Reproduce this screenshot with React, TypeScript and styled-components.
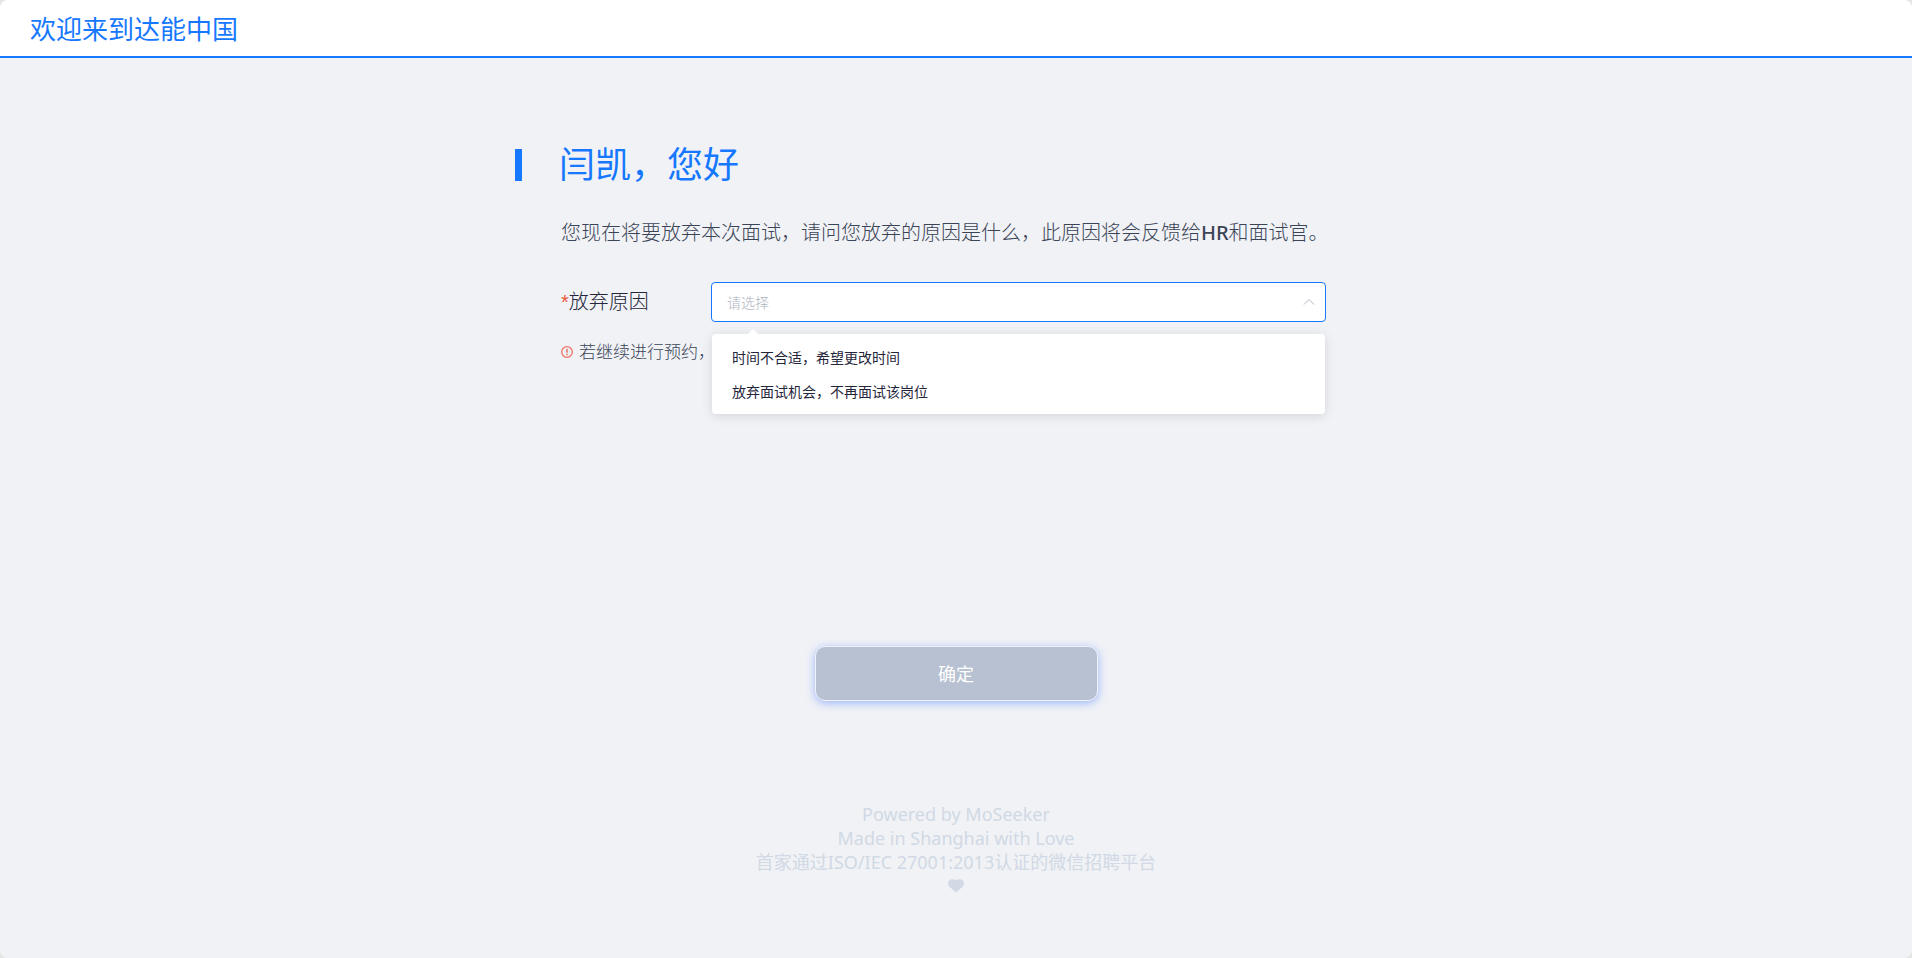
import React, { useState } from 'react';
import styled, { createGlobalStyle } from 'styled-components';

const blue = '#1677ff';

const GlobalStyle = createGlobalStyle`
  * { box-sizing: border-box; }
  html { background: #e4e4e4; }
  body {
    margin: 0;
    color: #3b4457;
    font-family: "Noto Sans", "Noto Sans CJK SC", sans-serif;
  }
  button, select { font-family: inherit; }
`;

const Page = styled.div`
  display: flex;
  flex-direction: column;
  min-height: 100vh;
  overflow: hidden;
  border-radius: 8px;
  background: #f0f2f6;
`;

const Header = styled.header`
  display: flex;
  align-items: center;
  height: 58px;
  padding: 2px 30px 0;
  border-bottom: 2px solid ${blue};
  background: #fff;
`;

const Brand = styled.span`
  color: ${blue};
  font-size: 26px;
  line-height: 40px;
`;

const Main = styled.main`
  width: 100%;
  max-width: 882px;
  margin: 0 auto;
  padding-top: 80px;
`;

const Greeting = styled.h1`
  display: flex;
  align-items: center;
  gap: 37px;
  margin: 0;
  color: ${blue};
  font-size: 36px;
  line-height: 54px;
  font-weight: 400;

  &::before {
    content: '';
    width: 7px;
    height: 32px;
    background: ${blue};
  }
`;

const Form = styled.form`
  padding-left: 46px;
`;

const Lead = styled.p`
  margin: 25px 0 33px;
  font-size: 20px;
  line-height: 32px;
  font-weight: 300;
  white-space: nowrap;
`;

const Latin = styled.span`
  font-weight: 500;
`;

const Row = styled.div`
  display: flex;
  align-items: center;
`;

const Label = styled.label`
  width: 150px;
  color: #24253a;
  font-size: 20px;
  line-height: 40px;
  font-weight: 300;
`;

const Required = styled.span`
  color: #e8563a;
  font-family: "Liberation Sans", sans-serif;
  font-size: 20px;
  line-height: 20px;
`;

const SelectBox = styled.div`
  position: relative;
  flex: 0 1 615px;
`;

const Select = styled.select<{ $empty: boolean }>`
  display: block;
  width: 100%;
  height: 40px;
  padding: 0 36px 0 15px;
  border: 1px solid ${blue};
  border-radius: 4px;
  outline: none;
  appearance: none;
  background: #fff;
  color: ${p => (p.$empty ? '#aeb3be' : '#24253a')};
  font-size: 14px;
  font-weight: 300;
`;

const Caret = styled.svg`
  position: absolute;
  top: 16px;
  right: 11px;
  pointer-events: none;
`;

const Menu = styled.div`
  position: absolute;
  z-index: 1;
  top: 52px;
  left: 1px;
  right: 1px;
  padding: 7px 0 5px;
  border-radius: 4px;
  background: #fff;
  box-shadow: 0 2px 12px rgba(0, 0, 0, 0.12);
`;

const MenuArrow = styled.svg`
  position: absolute;
  top: -5px;
  left: 35px;
`;

const MenuItem = styled.button`
  display: block;
  width: 100%;
  height: 34px;
  padding: 0 20px;
  border: 0;
  background: none;
  color: #24253a;
  font-size: 14px;
  line-height: 34px;
  text-align: left;
  cursor: pointer;
`;

const Note = styled.p`
  display: flex;
  align-items: center;
  gap: 6px;
  margin: 16px 0 0;
  font-size: 17px;
  line-height: 28px;
  font-weight: 300;
`;

const Submit = styled.button`
  display: block;
  width: 283px;
  height: 55px;
  margin: 280px auto 0;
  padding: 0 0 2px;
  border: 1px solid #eef2fb;
  border-radius: 10px;
  background: #b8c1d1;
  box-shadow: 0 2px 8px rgba(70, 120, 255, 0.5);
  color: #fff;
  font-size: 18px;
`;

const Footer = styled.footer`
  display: flex;
  flex-direction: column;
  align-items: center;
  padding: 101px 0 60px;
  color: #d1d9e4;
  font-size: 18px;
  line-height: 24px;
`;

const HeartLine = styled.span`
  display: flex;
  align-items: center;
  height: 24px;
`;

const reasons = ['时间不合适，希望更改时间', '放弃面试机会，不再面试该岗位'];

export default function App() {
  const [reason, setReason] = useState('');
  const [open, setOpen] = useState(true);

  const choose = (value: string) => {
    setReason(value);
    setOpen(false);
  };

  return (
    <Page>
      <GlobalStyle />
      <Header>
        <Brand>欢迎来到达能中国</Brand>
      </Header>
      <Main>
        <Greeting>闫凯，您好</Greeting>
        <Form onSubmit={e => e.preventDefault()}>
          <Lead>
            您现在将要放弃本次面试，请问您放弃的原因是什么，此原因将会反馈给<Latin>HR</Latin>和面试官。
          </Lead>
          <Row>
            <Label htmlFor="reason">
              <Required>*</Required>放弃原因
            </Label>
            <SelectBox>
              <Select
                id="reason"
                $empty={!reason}
                value={reason}
                onMouseDown={e => {
                  e.preventDefault();
                  setOpen(!open);
                }}
                onChange={e => choose(e.target.value)}
              >
                <option value="" disabled>请选择</option>
                {reasons.map(r => (
                  <option key={r} value={r}>{r}</option>
                ))}
              </Select>
              <Caret width="12" height="8" viewBox="0 0 12 8" fill="none" stroke="#b4b8c2">
                <path d="M1 6.5 6 1.5l5 5" />
              </Caret>
              {open && (
                <Menu>
                  <MenuArrow width="12" height="6" viewBox="0 0 12 6" fill="#fff">
                    <path d="M0 6 5 .8Q6 0 7 .8L12 6Z" />
                  </MenuArrow>
                  {reasons.map(r => (
                    <MenuItem key={r} type="button" onClick={() => choose(r)}>{r}</MenuItem>
                  ))}
                </Menu>
              )}
            </SelectBox>
          </Row>
          <Note>
            <svg width="12" height="12" viewBox="0 0 12 12" fill="none" stroke="#ee7466" strokeWidth="1.3">
              <circle cx="6" cy="6" r="5.3" />
              <path d="M6 2.8v4M6 7.8v1.4" strokeWidth="1.5" />
            </svg>
            若继续进行预约，
          </Note>
        </Form>
      </Main>
      <Submit type="button" disabled={!reason}>确定</Submit>
      <Footer>
        <span>Powered by MoSeeker</span>
        <span>Made in Shanghai with Love</span>
        <span>首家通过ISO/IEC 27001:2013认证的微信招聘平台</span>
        <HeartLine>
          <svg width="16" height="14" viewBox="0 0 16 14" fill="#d1d9e4">
            <path d="M8 13.5 1.2 7.4A4.3 4.3 0 0 1 0 4.4 4.2 4.2 0 0 1 4.2.2C5.8.2 7.3.6 8 1.6 8.700.6 10.200.2 11.800.2A4.200 4.200 0 0 1 16 4.400a4.300 4.300 0 0 1-1.200 3Z" />
          </svg>
        </HeartLine>
      </Footer>
    </Page>
  );
}
